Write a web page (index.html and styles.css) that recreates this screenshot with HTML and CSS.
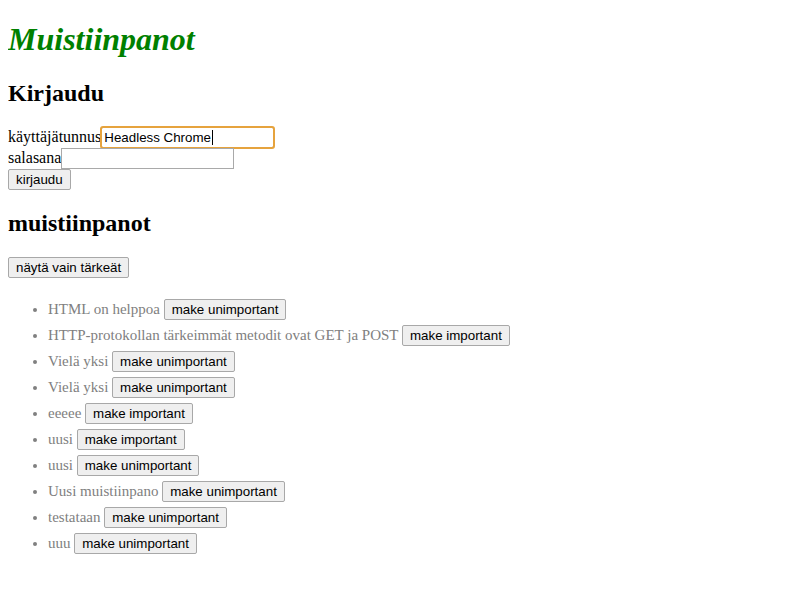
FILE: index.html
```html
<!DOCTYPE html>
<html>
<head>
<meta charset="utf-8">
<title>Muistiinpanot</title>
<link rel="stylesheet" href="styles.css">
</head>
<body>
<h1>Muistiinpanot</h1>
<h2>Kirjaudu</h2>
<form class="login">
  <div>käyttäjätunnus<input class="field focused" type="text" value="Headless Chrome"><span class="caret"></span></div>
  <div>salasana<input class="field" type="password"></div>
  <button class="btn" type="button">kirjaudu</button>
</form>
<h2>muistiinpanot</h2>
<div><button class="btn" type="button">näytä vain tärkeät</button></div>
<ul class="notes">
  <li>HTML on helppoa <button class="btn">make unimportant</button></li>
  <li>HTTP-protokollan tärkeimmät metodit ovat GET ja POST <button class="btn">make important</button></li>
  <li>Vielä yksi <button class="btn">make unimportant</button></li>
  <li>Vielä yksi <button class="btn">make unimportant</button></li>
  <li>eeeee <button class="btn">make important</button></li>
  <li>uusi <button class="btn">make important</button></li>
  <li>uusi <button class="btn">make unimportant</button></li>
  <li>Uusi muistiinpano <button class="btn">make unimportant</button></li>
  <li>testataan <button class="btn">make unimportant</button></li>
  <li>uuu <button class="btn">make unimportant</button></li>
</ul>
</body>
</html>
```
FILE: styles.css
```css
body {
  margin: 0 8px 8px;
  font-family: "Liberation Serif", serif;
  font-size: 16px;
  color: #000;
  background: #fff;
}
h1 {
  color: green;
  font-style: italic;
  font-size: 32px;
  margin: 21.44px 0;
}
h2 {
  font-size: 24px;
  margin: 19.92px 0;
}
.login {
  margin: 0;
}
.login div {
  position: relative;
}
.field {
  font-family: "Liberation Sans", sans-serif;
  font-size: 13.33px;
  width: 173px;
  height: 21px;
  box-sizing: border-box;
  padding: 1px 2px;
  border: 1px solid #a9a9a9;
  border-radius: 0;
  margin: 0;
  vertical-align: baseline;
  color: #000;
}
.focused {
  outline: 2px solid #e6a33d;
  outline-offset: -1px;
  border-radius: 2px;
}
.caret {
  position: absolute;
  left: 204px;
  top: 3px;
  width: 1px;
  height: 15px;
  background: #000;
}
.btn {
  font-family: "Liberation Sans", sans-serif;
  font-size: 13.33px;
  color: #000;
  background: #efefef;
  border: 1px solid #a8a8a8;
  border-radius: 2px;
  padding: 1px 7px;
  height: 21px;
  box-sizing: border-box;
  margin: 0;
  line-height: normal;
}
.notes {
  margin: 16px 0;
  padding-left: 40px;
}
.notes li {
  color: grey;
  font-size: 15px;
  padding-top: 5px;
}
```
